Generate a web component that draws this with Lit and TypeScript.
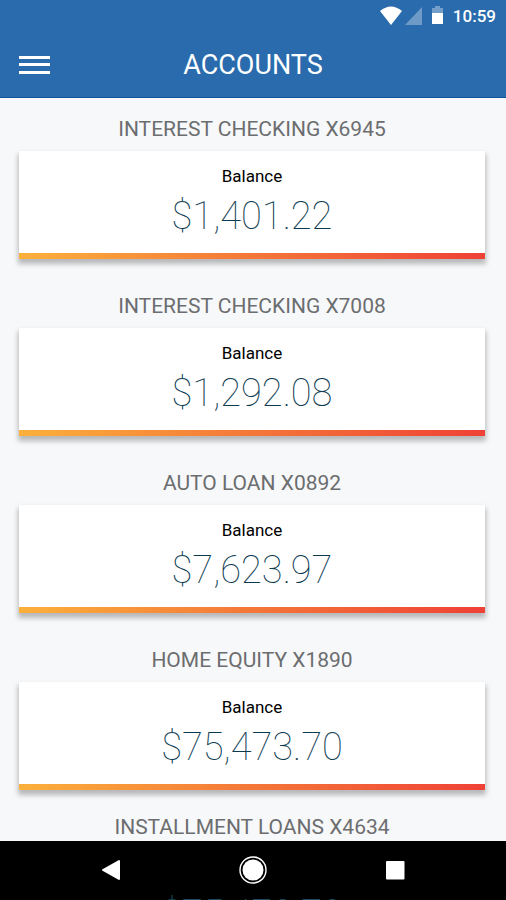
import { LitElement, html, css, nothing } from "lit";
import { customElement, property } from "lit/decorators.js";

interface Account {
  name: string;
  balance: string;
}

const ACCOUNTS: Account[] = [
  { name: "INTEREST CHECKING X6945", balance: "$1,401.22" },
  { name: "INTEREST CHECKING X7008", balance: "$1,292.08" },
  { name: "AUTO LOAN X0892", balance: "$7,623.97" },
  { name: "HOME EQUITY X1890", balance: "$75,473.70" },
  { name: "INSTALLMENT LOANS X4634", balance: "" },
];

@customElement("account-card")
export class AccountCard extends LitElement {
  @property() name = "";
  @property() balance = "";

  static styles = css`
    :host {
      display: block;
      text-align: center;
    }
    .name {
      margin: 0;
      font-size: 21px;
      font-weight: 400;
      line-height: 26px;
      color: #6c6d6f;
    }
    .card {
      margin-top: 9px;
      background: #fff;
      box-shadow: 0 4px 5px 1px rgba(0, 0, 0, 0.26);
    }
    .body {
      display: flex;
      flex-direction: column;
      padding: 12px 0 10px;
    }
    .label {
      font-size: 17px;
      line-height: 26px;
      color: #000;
    }
    .amount {
      font-size: 38px;
      font-weight: 100;
      line-height: 54px;
      color: #0b3a50;
    }
    .bar {
      height: 6px;
      background: linear-gradient(to right, #fbb03b, #f47738 50%, #ef4136);
    }
  `;

  render() {
    return html`
      <h2 class="name">${this.name}</h2>
      ${this.balance
        ? html`<div class="card">
            <div class="body">
              <span class="label">Balance</span>
              <span class="amount">${this.balance}</span>
            </div>
            <div class="bar"></div>
          </div>`
        : nothing}
    `;
  }
}

@customElement("app-root")
export class AppRoot extends LitElement {
  static styles = css`
    :host {
      display: flex;
      flex-direction: column;
      height: 100vh;
      overflow: hidden;
      font-family: Roboto, sans-serif;
      background: #f7f8fa;
    }
    .top {
      flex: none;
      background: #296bac;
      border-bottom: 1px solid #0f559c;
      color: #fff;
    }
    .status {
      display: flex;
      justify-content: flex-end;
      align-items: center;
      height: 32px;
      padding-right: 10px;
      font-size: 17px;
      font-weight: 500;
      line-height: 32px;
    }
    .status svg {
      margin-right: 9px;
    }
    .header {
      display: grid;
      grid-template-columns: 1fr auto 1fr;
      align-items: center;
      height: 65px;
      padding: 0 19px;
    }
    .menu {
      justify-self: start;
      display: flex;
      padding: 0;
      border: 0;
      background: none;
      color: inherit;
    }
    .title {
      margin: 0;
      font-size: 27px;
      font-weight: 400;
      line-height: 34px;
    }
    .list {
      flex: 1;
      min-height: 0;
      overflow: hidden;
      display: flex;
      flex-direction: column;
      gap: 34px;
      padding: 18px 21px 0 19px;
    }
    .list account-card {
      flex: none;
    }
    .list account-card:last-child {
      margin-top: -10px;
    }
    .nav {
      flex: none;
      background: #000;
    }
    .keys {
      display: grid;
      grid-template-columns: repeat(3, 28%);
      justify-content: center;
      align-items: center;
      height: 50px;
      padding-top: 4px;
    }
    .keys button {
      display: flex;
      padding: 0;
      border: 0;
      background: none;
      justify-self: center;
    }
    .peek {
      height: 5px;
      padding: 0 21px 0 19px;
      overflow: hidden;
      text-align: center;
      font-size: 38px;
      font-weight: 100;
      line-height: 38px;
      color: #1a4a5e;
    }
    .peek span {
      display: block;
    }
  `;

  render() {
    return html`
      <header class="top">
        <div class="status">
          <svg width="64" height="20" viewBox="0 0 64 20" aria-hidden="true">
            <path d="M0 5Q11 -4 22 5L11 19Z" fill="#fff" />
            <path d="M42 1V19H25Z" fill="#fff" opacity=".32" />
            <path d="M52 7V2H55V0H60V2H63V7Z" fill="#fff" opacity=".35" />
            <path d="M52 7H63V18H52Z" fill="#fff" />
          </svg>
          <span>10:59</span>
        </div>
        <div class="header">
          <button class="menu" aria-label="Menu">
            <svg width="31" height="20" viewBox="0 0 31 20">
              <path d="M0 1h31v3H0zM0 8h31v3H0zM0 16h31v3H0z" fill="#fff" />
            </svg>
          </button>
          <h1 class="title">ACCOUNTS</h1>
        </div>
      </header>
      <main class="list">
        ${ACCOUNTS.map(
          (a) => html`<account-card .name=${a.name} .balance=${a.balance}></account-card>`
        )}
      </main>
      <nav class="nav">
        <div class="keys">
          <button aria-label="Back">
            <svg width="20" height="22" viewBox="0 0 20 22">
              <path
                d="M18 2V20L2 11Z"
                fill="#fff"
                stroke="#fff"
                stroke-width="2"
                stroke-linejoin="round"
              />
            </svg>
          </button>
          <button aria-label="Home">
            <svg width="28" height="28" viewBox="0 0 28 28">
              <circle cx="14" cy="14" r="13" fill="none" stroke="#fff" stroke-width="1.4" />
              <circle cx="14" cy="14" r="10.5" fill="#fff" />
            </svg>
          </button>
          <button aria-label="Recent apps">
            <svg width="20" height="20" viewBox="0 0 20 20">
              <rect x="1" y="1" width="18.5" height="18.5" rx="1" fill="#fff" />
            </svg>
          </button>
        </div>
        <div class="peek" aria-hidden="true"><span>$75,473.70</span></div>
      </nav>
    `;
  }
}
